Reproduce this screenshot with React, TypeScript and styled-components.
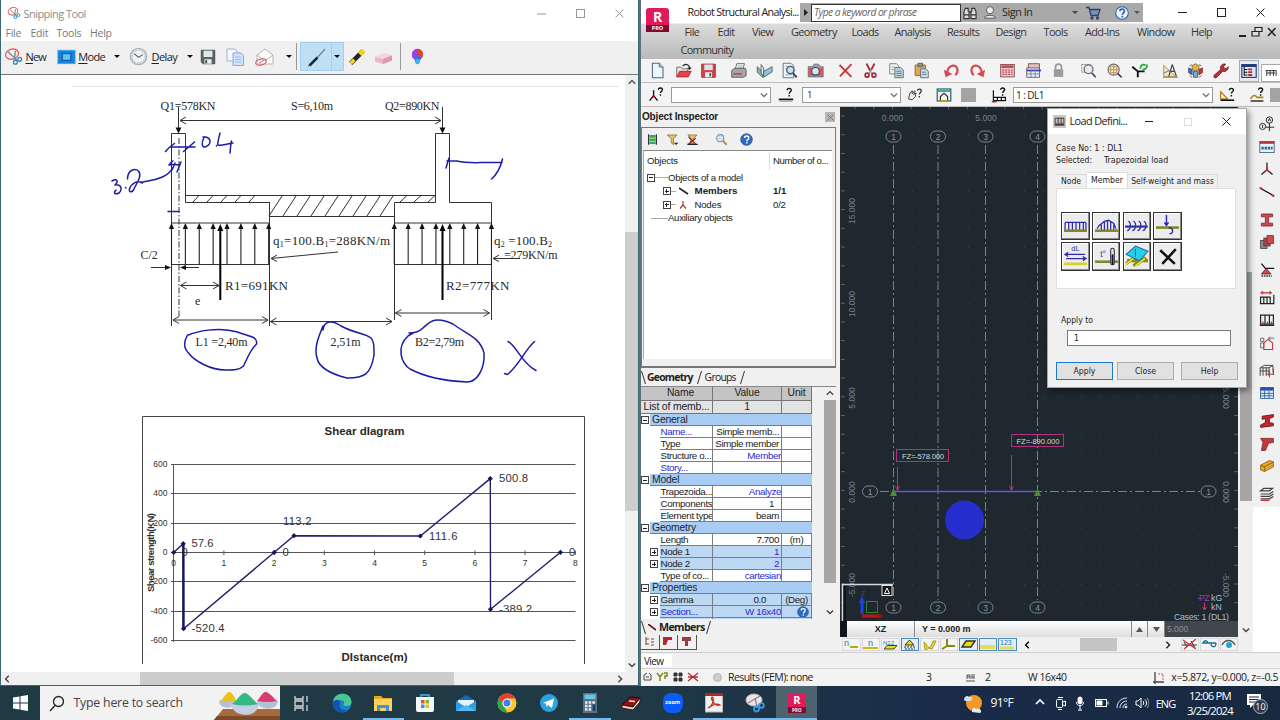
import React from 'react';
import styled, { createGlobalStyle, css } from 'styled-components';

const UI = `'Open Sans', 'Noto Sans', sans-serif`;
const ARIAL = `'Liberation Sans', Arial, sans-serif`;
const TAHOMA = `'DejaVu Sans Condensed', 'Noto Sans', sans-serif`;
const TIMES = `'Liberation Serif', 'Times New Roman', serif`;

const GlobalStyle = createGlobalStyle`
  * { box-sizing: border-box; }
  body { margin: 0; overflow: hidden; background: #1f3a46; }
  svg { display: block; flex: none; }
`;

/* ---------- icons ---------- */

const K = '#222';
const R = '#c8303a';

const icons: Record<string, React.ReactNode> = {
  snip: (
    <g fill="none">
      <ellipse cx="8.5" cy="7.5" rx="7" ry="5.2" stroke="#e0555a" strokeWidth="1.3" transform="rotate(-18 8.5 7.5)" />
      <path d="M4 5l10 9M12 4l-1 10" stroke="#7b8794" strokeWidth="1.4" />
      <circle cx="12" cy="16" r="2" stroke="#2a86c8" strokeWidth="1.4" />
      <circle cx="16.5" cy="13" r="2" stroke="#2a86c8" strokeWidth="1.4" />
    </g>
  ),
  mode: (
    <g>
      <rect x="1" y="3.5" width="18" height="14" fill="#1583dc" />
      <rect x="1" y="3.5" width="18" height="14" fill="none" stroke="#35a6ef" />
      <rect x="5.5" y="7" width="9" height="7" fill="#5ec3f5" stroke="#0b4f96" />
    </g>
  ),
  delay: (
    <g>
      <circle cx="10" cy="10" r="8.6" fill="#dcdfe2" stroke="#aeb2b6" strokeWidth="1.4" />
      <circle cx="10" cy="10" r="6.6" fill="#eff1f2" stroke="#989da1" strokeDasharray="1 2.4" />
      <path d="M5.5 7L10 11l4.5-3" fill="none" stroke="#555" strokeWidth="1.1" />
    </g>
  ),
  floppy: (
    <g>
      <path d="M2.5 2.5h15v15h-13l-2-2z" fill="#5d6266" stroke="#44484b" />
      <rect x="5" y="3" width="10" height="7" fill="#dfe6e8" />
      <rect x="6" y="12.5" width="8" height="5" fill="#eee" />
      <rect x="7" y="13.5" width="2" height="3.5" fill="#444" />
    </g>
  ),
  copyBlue: (
    <g>
      <path d="M2 2h8l2 2v10H2z" fill="#f4f8fc" stroke="#9fb3cc" />
      <path d="M8 6h8l2.500 2.500V18.500H8z" fill="#cfe2fa" stroke="#8ea9d0" />
      <path d="M10 10h6M10 12.500h6M10 15h6" stroke="#9dbbe2" />
    </g>
  ),
  mail: (
    <g fill="#fafafa" stroke="#b5b5b5">
      <path d="M3 8l8-6 8 6v9H3z" />
      <path d="M3 8l8 6 8-6" fill="none" />
      <ellipse cx="7" cy="15" rx="5.500" ry="3" fill="none" stroke="#d66" strokeWidth="1.200" transform="rotate(-15 7 15)" />
      <path d="M5 16l5-3" stroke="#d66" />
    </g>
  ),
  pen: (
    <g>
      <path d="M10 11L18 2" stroke="#7c858c" strokeWidth="1.300" />
      <path d="M2.500 18.500L10.500 10.500" stroke="#1c2b38" strokeWidth="2.500" />
      <path d="M1.200 19.500l2-2" stroke="#1c2b38" />
    </g>
  ),
  highlighter: (
    <g>
      <path d="M3 17L16.500 3.500" stroke="#222" strokeWidth="5" />
      <path d="M13 7L17.500 2.500" stroke="#f2d61d" strokeWidth="5" />
      <path d="M3 17l4-4" stroke="#f2d61d" strokeWidth="4" />
    </g>
  ),
  eraser: (
    <g>
      <path d="M2 10l9-3.500 8 2v5L10 17l-8-2.500z" fill="#eeb4c6" />
      <path d="M2 10l9-3.500 8 2-9 3.500z" fill="#f8d5de" />
      <path d="M10 12v5l9-3.500v-5z" fill="#dc9ab0" />
    </g>
  ),
  paint3d: (
    <g>
      <path d="M10 1a6.500 6.500 0 0 1 6.500 6.500c0 4-4 5.500-4 9a2.500 2.500 0 0 1-5 0c0-3.500-4-5-4-9A6.500 6.500 0 0 1 10 1z" fill="#3f6de8" />
      <path d="M10 1a6.500 6.500 0 0 1 6.500 6.500c0 2-1 3.500-2 4.500L10 8z" fill="#e8422e" />
      <path d="M10 1v7l-5.500 4a7 7 0 0 1-1-4.500A6.500 6.500 0 0 1 10 1z" fill="#a63de0" />
      <path d="M8 13h4l.5 3.500a2.500 2.500 0 0 1-5 0z" fill="#37b6ea" />
    </g>
  ),
  file: (
    <g>
      <path d="M4 1.500h8l4.500 4.500v12.500H4z" fill="#eaf5fc" stroke="#567" strokeWidth="1.200" />
      <path d="M12 1.500V6h4.500" fill="#bcd" stroke="#567" />
    </g>
  ),
  open: (
    <g>
      <path d="M2 17V6h5l2 2h6v9z" fill="#e9e0e0" stroke="#666" />
      <path d="M2 17.500L5.500 11H19l-3.500 6.500z" fill="#e6434b" stroke="#a3232b" />
      <path d="M9 5c2-3 6-3 8 .500v3M15 6.500l2 2 2-2" fill="none" stroke={K} strokeWidth="1.300" />
    </g>
  ),
  saveRed: (
    <g>
      <path d="M2 2.500h16v15.500H2z" fill="#d8434b" stroke="#8f2830" />
      <rect x="5" y="3" width="10" height="6.500" fill="#d6e5ee" />
      <rect x="6" y="12" width="8" height="6" fill="#e8eef2" />
      <rect x="11" y="13" width="2" height="4" fill="#555" />
    </g>
  ),
  print: (
    <g stroke="#555">
      <path d="M6 9l2-7h9l-2 7" fill="#fff" />
      <path d="M2 10l3-2.500h13l1 2.500v6l-3 2H2z" fill="#a7a3a6" />
      <path d="M4 14h10" stroke={R} strokeWidth="1.500" />
      <path d="M9 4.500h6M8.500 6.500h6" stroke="#999" />
    </g>
  ),
  book: (
    <g stroke="#4a5a60" strokeLinejoin="round">
      <path d="M1.500 5.500L8 12v6L1.500 12z" fill="#8fb7a0" />
      <path d="M6 3l3 4v10L6 13z" fill="#e7eef0" />
      <path d="M9 11l10-5.500v6L9 18z" fill="#8fc4dc" />
    </g>
  ),
  preview: (
    <g>
      <path d="M2.500 1.500h9l3.500 3v14h-12.500z" fill="#eef5fa" stroke="#567" />
      <path d="M5 5h4M5 8h3M5 15h8" stroke="#89a" />
      <circle cx="11" cy="9.500" r="4.300" fill="#c4e2ef" stroke="#456" strokeWidth="1.500" />
      <path d="M14 13l4.500 5" stroke="#345" strokeWidth="2.200" />
    </g>
  ),
  camera: (
    <g>
      <path d="M1.500 5.500h5l2-3h5l2 3h3.500v12H1.500z" fill="#9aa3aa" stroke="#667" />
      <rect x="2" y="7" width="16.500" height="9" fill="#d2565b" />
      <circle cx="10" cy="11" r="4.500" fill="#cfe8f5" stroke="#445" strokeWidth="1.300" />
    </g>
  ),
  xred: <path d="M3 3.500l14 14M17 2.500L3.500 17" stroke="#c43c45" strokeWidth="2.300" />,
  cut: (
    <g fill="none" stroke="#a82f38" strokeWidth="2">
      <path d="M5 2l7 12M15 2L8 14" stroke="#aaa" />
      <path d="M5.500 2l4 8M14.500 2L11 9" />
      <circle cx="6" cy="15.500" r="2.300" />
      <circle cx="14" cy="15.500" r="2.300" />
    </g>
  ),
  copy: (
    <g>
      <path d="M2 2h8l2.500 2.500V14H2z" fill="#eef1f3" stroke="#777" />
      <path d="M8 6.500h7l3 3v9H8z" fill="#b9cbd6" stroke="#5e6b74" />
      <path d="M10 11h5M10 13.500h6M10 16h6" stroke="#678" />
      <path d="M4 6h4M4 9h3" stroke="#8a9" />
    </g>
  ),
  paste: (
    <g>
      <path d="M2.500 3.500h12V16h-12z" fill="#dfa457" stroke="#8a5f22" />
      <rect x="6" y="1.500" width="5" height="3.500" fill="#999" stroke="#555" />
      <path d="M9 8h6l3 3v7.500H9z" fill="#c9dcea" stroke="#4f6474" />
      <path d="M11 12h4M11 14.500h5" stroke="#567" />
    </g>
  ),
  undo: (
    <g>
      <path d="M5 12C6 4 15 1 17 8.500c.5 3-1 5.500-2.500 7" fill="none" stroke="#d34a50" strokeWidth="2.600" />
      <path d="M1 9l2 9 8-4z" fill="#d34a50" />
    </g>
  ),
  redo: (
    <g>
      <path d="M15 12C14 4 5 1 3 8.500c-.5 3 1 5.500 2.500 7" fill="none" stroke="#d34a50" strokeWidth="2.600" />
      <path d="M19 9l-2 9-8-4z" fill="#d34a50" />
    </g>
  ),
  calcRed: (
    <g>
      <rect x="2" y="3" width="16" height="14.500" fill="#eec9cb" stroke="#7c4247" />
      <rect x="3" y="4" width="14" height="3" fill="#c2474e" />
      <path d="M4 9.500h12M4 12h12M4 14.500h12" stroke="#b84e55" strokeWidth="1.500" strokeDasharray="2.200 1.200" />
    </g>
  ),
  calcTable: (
    <g>
      <path d="M4 2h13v6H4z" fill="#e3c0c3" stroke="#7c4247" />
      <path d="M2 7h15v11H2z" fill="#eef0f6" stroke="#556" />
      <path d="M2 10h17" stroke="#3a3fb5" strokeWidth="2" />
      <path d="M2 14h15M7 9v9M12 9v9" stroke="#779" />
    </g>
  ),
  lock: (
    <g>
      <path d="M6.500 9V6a3.500 3.500 0 0 1 7 0v3" fill="none" stroke="#999" strokeWidth="2" />
      <rect x="4.500" y="8.500" width="11" height="9" fill="#9a9a9a" />
    </g>
  ),
  zoomWin: (
    <g fill="none">
      <path d="M2 3h10v9H2z" stroke="#777" strokeDasharray="2 1" />
      <circle cx="10" cy="8.500" r="5.200" fill="#e8eff2" stroke="#667" strokeWidth="1.500" />
      <path d="M14 13l4.500 5" stroke="#445" strokeWidth="2" />
    </g>
  ),
  zoomAll: (
    <g fill="none">
      <circle cx="9" cy="9" r="6.500" fill="#f3ead8" stroke="#667" strokeWidth="1.300" />
      <path d="M9 2v14M2 9h14M5.500 5.500h7v7h-7z" stroke="#c08a35" />
      <path d="M13.500 13.500l5 4.500" stroke="#445" strokeWidth="2" />
    </g>
  ),
  rotate: (
    <g fill="none">
      <path d="M1.500 5.500L8 11h8M8 11v7" stroke="#111" strokeWidth="2.200" />
      <path d="M11 8c0-5 4-6 6-4M18.500 3c1 4-2 6-5 5.500" stroke="#28a745" strokeWidth="2" />
    </g>
  ),
  tools: (
    <g>
      <path d="M2 4l14 13H2z" fill="#f0e6c4" stroke="#a98b3d" />
      <path d="M12 3l-4 14M12 3l5 14M9.500 11h6" fill="none" stroke="#444" strokeWidth="1.400" />
      <path d="M2 13l9-4" stroke="#3a6fb5" />
      <path d="M1 18h18" stroke="#b89640" strokeWidth="1.500" />
    </g>
  ),
  cubes: (
    <g>
      <path d="M10 2l4 2.500v4L10 11 6 8.500v-4z" fill="#e0b53a" stroke="#7d6a3a" />
      <path d="M2 7l4 2v6l-4-2.500z" fill="#4d66c8" stroke="#334480" />
      <path d="M18 7l-4 2v6l4-2.500z" fill="#c43a3f" stroke="#7a2228" />
      <path d="M7.500 11h5v7h-5z" fill="#7aa9d0" stroke="#456" />
      <path d="M3 4.500l3-1.500M17 4.500L14 3M3 16l3 2M17 16l-3 2" stroke="#944" />
    </g>
  ),
  wrench: (
    <path d="M2.500 15.500L10 9C9 5 12 1.500 16 2.500l-2.500 3 1 2 2 .5L19 5.500c.5 4-3 6.500-6.500 5.500L5 18.500c-2 1-3.500-1-2.500-3z" fill="#b7323b" stroke="#6e1d23" />
  ),
  inspector: (
    <g>
      <rect x="1" y="2" width="18" height="16" fill="#dfe8f4" stroke="#223a7a" strokeWidth="1.400" />
      <rect x="1" y="2" width="18" height="3" fill="#223a7a" />
      <path d="M4 5v11M4 8h4M4 11.500h4M4 15h4" stroke="#111" strokeWidth="1.300" />
      <path d="M9 8h5M9 11.500h5M9 15h5" stroke="#b02a30" strokeWidth="2.200" />
    </g>
  ),
  beam: <path d="M1 6h18M3 6v9M8.500 6v9M14 6v9M3 10h14M18.500 6v9" fill="none" stroke="#222" strokeWidth="1.500" />,
  nodeQ: (
    <g fill="none" stroke="#111" strokeWidth="1.700">
      <path d="M7 4v7l-5 6M7 11l5 6" />
      <path d="M13 3.500c0-3 5-3 5 0 0 2-2.500 2-2.500 4M15.500 9v2" />
      <path d="M5.500 13L7 11l1.500 2" stroke="#b03" />
    </g>
  ),
  barQ: (
    <g fill="none" stroke="#111">
      <path d="M1 15.500h18" strokeWidth="2.200" />
      <path d="M2 18h16" stroke="#b87" />
      <path d="M11.500 4c0-3 5-3 5 0 0 2-2.500 2-2.500 4.500M14 10v2" strokeWidth="1.800" />
    </g>
  ),
  handQ: (
    <g fill="none" stroke="#333" strokeWidth="1.200">
      <path d="M2 16l2-8 3-3v4l3-4 1 1-2 4 3-2-1 5-4 4z" fill="#eee" />
      <path d="M14 5c0-3 5-3 5 0 0 2.500-2.500 2.500-2.500 5M16.500 12v2" strokeWidth="1.800" />
    </g>
  ),
  house: (
    <g fill="none" stroke="#255">
      <rect x="1.500" y="2.500" width="17" height="15" fill="#e9f6f4" strokeWidth="1.400" />
      <path d="M2 5h16" stroke="#2a8c8c" strokeWidth="2" />
      <path d="M5.500 17v-5l4.500-4 4.500 4v5" stroke="#333" strokeWidth="1.500" />
      <path d="M5 17.500h10" stroke="#c90" strokeWidth="2" />
    </g>
  ),
  loadQ: (
    <g fill="none" stroke="#111" strokeWidth="1.500">
      <path d="M3 4v13h15v-4H3M8 13v4M13 13v4" />
      <path d="M1 18.500h6" stroke="#b03" />
      <path d="M12 3.500c0-3 5-3 5 0 0 2-2.500 2-2.500 4M14.500 9v2" strokeWidth="1.800" />
    </g>
  ),
  ruler: (
    <g fill="none">
      <path d="M2 6l9 9H2z" stroke="#b98219" strokeWidth="1.600" />
      <path d="M2 16.500h17" stroke="#111" strokeWidth="2" />
      <path d="M13 4c0-3 5-3 5 0 0 2-2.500 2-2.500 4M15.500 10v2" stroke="#111" strokeWidth="1.800" />
    </g>
  ),
  truck: (
    <g fill="none">
      <path d="M2 15c3-6 6-5 8-2h8" stroke="#b98219" strokeWidth="2" />
      <path d="M2 17.500h16" stroke="#111" strokeWidth="1.600" />
      <path d="M12 3.500c0-3 5-3 5 0 0 2-2.500 2-2.500 4M14.500 9v2" stroke="#111" strokeWidth="1.800" />
    </g>
  ),
  column: (
    <g>
      <path d="M4 2v16M16 2v16" stroke="#223" strokeWidth="1.600" />
      <path d="M5 3h10v14H5z" fill="#35a66a" />
      <path d="M5 8h10M5 13h10" stroke="#e7d34a" strokeWidth="1.500" />
    </g>
  ),
  filter: (
    <g>
      <path d="M2 3h15l-5.500 6v9L8 15V9z" fill="#e8c15a" stroke="#7a5b18" />
      <path d="M12 15h7l-3.500 3.500z" fill="#222" />
    </g>
  ),
  filterX: (
    <g>
      <path d="M3 3h14l-6 6v8H7V9z" fill="#e8c15a" stroke="#7a5b18" />
      <path d="M4 6l11 11M15 8L4 17" stroke="#8a2228" strokeWidth="1.800" />
      <path d="M2 17.500h16" stroke="#222" strokeWidth="2" />
    </g>
  ),
  magnifier: (
    <g>
      <circle cx="8" cy="8" r="5.500" fill="#cfe3f2" stroke="#7d93a8" strokeWidth="1.600" />
      <path d="M12 12l6 6" stroke="#c08a3c" strokeWidth="3" />
    </g>
  ),
  help: (
    <g>
      <circle cx="10" cy="10" r="9" fill="#2e6cc0" stroke="#1c4a8c" />
      <path d="M7 7.500c0-4 6.500-4 6.500 0 0 2.500-3 2.500-3 5M10.500 14v2.300" fill="none" stroke="#fff" strokeWidth="2.200" />
    </g>
  ),
  // right-hand toolbar
  axes: (
    <g fill="none" stroke="#222" strokeWidth="1.200">
      <circle cx="13" cy="5" r="4" />
      <path d="M11.500 6.500L13 3l1.500 3.500M13 9v10M8 14h11" />
      <circle cx="4.500" cy="13" r="3.800" />
      <path d="M4.500 11v4" />
    </g>
  ),
  stories: (
    <g>
      <rect x="1" y="3" width="18" height="14" fill="#e5f1f3" stroke="#356" />
      <rect x="1" y="3" width="18" height="3" fill="#b9323a" />
      <path d="M3 11.500h14" stroke="#256a94" strokeWidth="3.500" strokeDasharray="3 1" />
    </g>
  ),
  node: (
    <g fill="none" strokeWidth="1.600">
      <path d="M10 2v9M10 11l-7 6M10 11l7 6" stroke="#222" />
      <path d="M10 7v4l-2 2M10 11l2 2" stroke={R} />
    </g>
  ),
  bar: (
    <g>
      <path d="M1 5l18 10" stroke="#111" strokeWidth="1.600" />
      <path d="M1 4.500l3 1.600M16 14l3 1.600" stroke={R} strokeWidth="2.500" />
    </g>
  ),
  section: <path d="M3 2.500h14v3.500h-5v8h5v3.500H3V14h5V6H3z" fill="#cf4a50" stroke="#7a2228" />,
  materials: (
    <g stroke="#444">
      <rect x="2" y="8" width="8" height="10" fill="#888" />
      <rect x="6" y="5" width="8" height="10" fill="#b33f45" />
      <rect x="10" y="2" width="8" height="10" fill="#cf4a50" />
    </g>
  ),
  support: (
    <g>
      <path d="M3 2l5 6h11" stroke="#111" strokeWidth="1.600" fill="none" />
      <path d="M9 8l6 7H3z" fill="#cf4a50" stroke="#5a1b20" />
      <path d="M3 17.500h13" stroke="#333" strokeWidth="1.800" strokeDasharray="2 1" />
    </g>
  ),
  loadCase: (
    <g fill="none" stroke="#222" strokeWidth="1.300">
      <path d="M3 3.500h12" stroke={R} strokeWidth="1.600" />
      <path d="M5 1.500l-2.500 2L5 5.500M13 1.500l2.500 2-2.500 2" stroke={R} />
      <path d="M2 9h12v8H2zM6 9v8M10 9v8M18.500 6v11H1" strokeWidth="1.500" />
    </g>
  ),
  loadDef: (
    <g fill="none" stroke="#222" strokeWidth="1.500">
      <path d="M2 4h16v11H2zM7.500 4v11M13 4v11" />
      <path d="M1 16.500h18" strokeWidth="2" />
      <path d="M5 12v3M10.500 12v3M15.500 12v3" stroke={R} />
    </g>
  ),
  houseLoad: (
    <g fill="none">
      <path d="M2 4h4v4H2zM2 10h4v6H2zM12 4h7M14 2l-2 2 2 2" stroke="#555" />
      <path d="M6 18v-8l5.500-4.500L17 10v8z" stroke={R} strokeWidth="1.300" />
    </g>
  ),
  mesh: (
    <g fill="none" stroke="#444" strokeWidth="1.200">
      <path d="M1.500 6h11v10M1.500 6v10M5 6v10M9 6v10M1.500 10h11M1.500 6l5-3h11l-5 3M17.500 3v9" />
      <path d="M13 9v9M18 7v8M9 14h10" stroke="#a33" />
    </g>
  ),
  tableBlue: (
    <g>
      <rect x="2" y="3" width="16" height="14" fill="#dbe8f6" stroke="#2a5aa0" />
      <rect x="2" y="3" width="16" height="4" fill="#2a4fb0" />
      <path d="M2 10.500h16M2 13.500h16M7 7v10M12.500 7v10" stroke="#2a5aa0" />
    </g>
  ),
  steel: <path d="M4 4l14-2v3l-5 2v5l5 1v3L2 18v-3l6-3V7L4 8z" fill="#c5262d" stroke="#5a1216" />,
  steelCorner: <path d="M2 3h16v5l-6 1-4 9H3l2-10z" fill="#c5373d" stroke="#7a2228" />,
  timber: (
    <g stroke="#8a5a12">
      <path d="M2 9l11-6 5 2v6L7 17l-5-2z" fill="#e3a52c" />
      <path d="M2 9l5 2v6M7 11l11-6" fill="none" />
    </g>
  ),
  layers: (
    <g fill="none" stroke="#444" strokeWidth="1.500">
      <path d="M2 16h11l5-3M2 13h11l5-3M2 10h11l5-3M2 6h11l4-3H6z" />
      <path d="M2 18h11" stroke={R} />
    </g>
  ),
};

type IconProps = { name: string; size?: number };
const Icon = ({ name, size = 16 }: IconProps) => (
  <svg width={size} height={size} viewBox="0 0 20 20">
    {icons[name]}
  </svg>
);

/* ---------- shared parts ---------- */

const Txt = styled.span<{ $size?: number; $ls?: number; $color?: string; $font?: string; $bold?: boolean }>`
  font-family: ${p => p.$font ?? UI};
  font-size: ${p => p.$size ?? 11}px;
  letter-spacing: ${p => p.$ls ?? 0}px;
  color: ${p => p.$color ?? '#222'};
  font-weight: ${p => (p.$bold ? 700 : 400)};
  white-space: pre;
  line-height: 1;
`;

const Desktop = styled.div`
  width: 1280px;
  height: 720px;
  display: flex;
  flex-direction: column;
`;

const Windows = styled.div`
  display: flex;
  height: 686px;
  flex: none;
`;

const Spacer = styled.div<{ $w?: number; $h?: number }>`
  flex: ${p => (p.$w || p.$h ? 'none' : '1')};
  width: ${p => p.$w ?? 0}px;
  height: ${p => p.$h ?? 0}px;
`;

const Caret = styled.i<{ $color?: string }>`
  flex: none;
  border: 3px solid transparent;
  border-top-color: ${p => p.$color ?? '#111'};
  border-bottom: 0;
`;

const Chevron = ({ dir, size = 8, color = '#444' }: { dir: 'up' | 'down' | 'left' | 'right'; size?: number; color?: string }) => {
  const d = { up: 'M1 6l4-4 4 4', down: 'M1 3l4 4 4-4', left: 'M6 1L2 5l4 4', right: 'M3 1l4 4-4 4' }[dir];
  return (
    <svg width={size} height={size} viewBox="0 0 10 10">
      <path d={d} fill="none" stroke={color} strokeWidth="1.7" />
    </svg>
  );
};

/* ---------- Snipping Tool ---------- */

const SnipWindow = styled.section`
  width: 639px;
  flex: none;
  display: flex;
  flex-direction: column;
  background: #fff;
  border: solid #3d6774;
  border-width: 0 1px 1px 1px;
`;

const SnipTitle = styled.header`
  height: 26px;
  flex: none;
  display: flex;
  align-items: center;
  padding: 0 14px 0 6px;
`;

const CaptionButtons = styled.div<{ $gap: number }>`
  display: flex;
  align-items: center;
  gap: ${p => p.$gap}px;
`;

const SnipMenu = styled.nav`
  height: 15px;
  flex: none;
  display: grid;
  align-items: center;
  grid-template-columns: 25px 26px 33.5px 40px;
  padding-left: 4.5px;
`;

const SnipBar = styled.div`
  height: 34px;
  flex: none;
  display: flex;
  align-items: center;
  background: #f0f0f0;
  border-bottom: 1px solid #74787a;
  padding-left: 3px;
  padding-bottom: 2px;
`;

const Rule = styled.i<{ $h: number; $color?: string }>`
  width: 1px;
  height: ${p => p.$h}px;
  background: ${p => p.$color ?? '#9a9a9a'};
  flex: none;
`;

const PenGroup = styled.div`
  display: flex;
  align-items: center;
  width: 44px;
  height: 29px;
  background: #bfdff6;
  border: 1px solid #a2cdee;
  padding-left: 6px;
  margin: 0 4px 0 3px;
`;

const PenDrop = styled.div`
  height: 100%;
  width: 12px;
  display: flex;
  align-items: center;
  justify-content: center;
  border-left: 1px solid #a2cdee;
  margin-left: auto;
`;

const SnipBody = styled.div`
  display: flex;
  height: 597px;
`;

const VScroll = styled.div<{ $w: number }>`
  width: ${p => p.$w}px;
  flex: none;
  display: flex;
  flex-direction: column;
  align-items: center;
  background: #f0f0f0;
`;

const Thumb = styled.i<{ $w: number; $h: number; $color?: string }>`
  flex: none;
  width: ${p => p.$w}px;
  height: ${p => p.$h}px;
  background: ${p => p.$color ?? '#cdcdcd'};
`;

const HScroll = styled.div`
  height: 13px;
  flex: none;
  display: flex;
  align-items: center;
  background: #f0f0f0;
  padding: 0 2px 0 3px;
`;

const U = styled.u`
  text-underline-offset: 2px;
`;

const upArrows = (from: number) =>
  Array.from({ length: 8 }, (_, i) => from + i * 13.88).map(x => (
    <g key={x}>
      <path d={`M${x} 264.500V226`} stroke="#222" strokeWidth="1.100" />
      <path d={`M${x} 223l-2.600 6h5.200z`} fill="#111" />
    </g>
  ));

const dim = (x1: number, x2: number, y: number) => (
  <path key={`${x1}-${y}`} d={`M${x1} ${y}H${x2}M${x1 + 6} ${y - 3.5}L${x1} ${y}l6 3.500M${x2 - 6} ${y - 3.5}L${x2} ${y}l-6 3.500`} />
);

const FootingDrawing = () => (
  <g>
    <path d="M72 86.500H618" stroke="#e2e2e2" />
    <g fill="none" stroke="#333" strokeWidth="1">
      <path d="M171.500 326V133.500H185.500V202.500H269M269.500 202V326M185.500 195.500H435.500M269 216.500H394M171.500 223H269" />
      <path d="M394.500 320V202.500H435.500V133.500H449.500V202.500H491.500V320M394 223H491M171.500 264.500H269M394 264.500H491" />
      <path d="M179 138V318" strokeDasharray="6 2 1.500 2" />
      <path d="M178.500 107V130M442.500 107V130" />
      {dim(180, 441, 120.5)}
      {dim(173, 268, 320)}
      {dim(270.500, 392, 321.500)}
      {dim(395.500, 489.500, 313)}
      {dim(180.500, 219, 285.500)}
      <path d="M151 267.500H168M199 267.500H183" />
      <path d="M338 252L271 258.500M277 255l-6 3.500 6 3M520 258.500H493M499 255l-6 3.500 6 3" />
      {[193, 207, 221, 235, 249].map(x => <path key={x} d={`M${x} 202l6-6.500`} />)}
      {[400, 414, 428].map(x => <path key={x} d={`M${x} 202l7-6.500`} />)}
      {[269, 283, 297, 311, 325, 339, 353, 367, 380].map(x => <path key={x} d={`M${x} 216l13-20`} />)}
    </g>
    <path d="M178.500 133.500l-3-6h6zM442.500 133.500l-3-6h6zM171 267.500l-6-2.500v5zM180 267.500l6-2.500v5z" fill="#111" />
    {upArrows(171.5)}
    {upArrows(394.3)}
    <path d="M220.300 300V228M442.500 300V228" stroke="#000" strokeWidth="2" />
    <path d="M220.300 224l-3 7h6zM442.500 224l-3 7h6z" />
    <g fontFamily={TIMES} fontSize="12" fill="#2a2a2a">
      <text x="160.500" y="109.500" textLength="55">Q1=578KN</text>
      <text x="291" y="109.500" textLength="42">S=6,10m</text>
      <text x="385" y="109.500" textLength="54.500">Q2=890KN</text>
      <text x="140.500" y="259">C/2</text>
      <text x="195" y="304.500">e</text>
      <text x="195.500" y="345.500" textLength="52">L1 =2,40m</text>
      <text x="330.500" y="345.500" textLength="30">2,51m</text>
      <text x="415" y="345.500" textLength="49">B2=2,79m</text>
      <g fontSize="13">
        <text x="225" y="289.500" textLength="63">R1=691KN</text>
        <text x="446" y="289.500" textLength="63.500">R2=777KN</text>
        <text x="273" y="244.500" textLength="117">q<tspan fontSize="8" dy="2">1</tspan><tspan dy="-2">=100.B</tspan><tspan fontSize="8" dy="2">1</tspan><tspan dy="-2">=288KN/m</tspan></text>
        <text x="494" y="244.500" textLength="58">q<tspan fontSize="8" dy="2">2</tspan><tspan dy="-2"> =100.B</tspan><tspan fontSize="8" dy="2">2</tspan></text>
        <text x="504" y="259" fontSize="12" textLength="53.500">=279KN/m</text>
      </g>
    </g>
    <g fill="none" stroke="#1c1ca8" strokeWidth="1.500" strokeLinecap="round" strokeLinejoin="round">
      <path d="M165.500 151.500c3-4 6-6 9-8M170 147H195M183.500 151.500l11-9.500" />
      <path d="M204 137.500c-3 6-2 10 1 9.500 6-2 7-8 1-10h-3M216.500 145.500v.5M220 133c-1 5-3 10-2 12 4 1 8-1 15-2M231.500 141c-1 4-1 8-1.500 12" />
      <path d="M112 181c5-3 7 0 3 4 6-1 8 4 4 8-4 2-6 0-3-3M125.500 187.500l.5.5M127.500 179c0-9 7-11 11-8 4 5-2 12-5 19-2 3-5 2-4-1 2-6 8-9 13-6" />
      <path d="M141 182.500c12-3 27-3 33-17M169 165c2-2 3-4 4-4M169 165c4-1 7 0 11 0M175 163l-3 7M181 162l-4 10M168 211.500H179" />
      <path d="M187.500 335c-4 7-4 13 1 18 6 8 22 17 37 17 8 0 14 0 18-4 4-8 6-15 13-22 2-8-10-8-19-12-20-6-42 0-49 3" />
      <path d="M323 326c-5 12-9 22-6 32 2 10 14 16 30 20 18 0 24-4 27-23 0-9 0-14-3-17-6-5-15-4-30-12-8-6-17-6-18 4" />
      <path d="M413 333l-5 3c-12 11-7 27 2 33 15 8 35 12 57 13 10 0 18-13 17-29-4-16-18-19-31-29-19-9-24-1-30 4-3 3-7 5-14 5" />
      <path d="M508 341.500c9 5 14 22 28 29M534.500 341.500c-10 9-15 23-27 33l-3-1" />
      <path d="M446 168l3-10M447 161h10c12 3 20 1 45 1.500M502.500 159c-2 8-5 15-11 20" />
    </g>
  </g>
);

const tickX = (v: number) => 173.7 + v * 50.2;
const tickY = (v: number) => 553 - v * 0.147;

const shear: [number, number][] = [
  [173.7, 552.4], [183.2, 543.7], [183.6, 628.7], [274.3, 552.3], [294, 535.7],
  [420.3, 536], [490.3, 478.6], [490.5, 609.3], [560.5, 552.3],
];

const ShearChart = () => (
  <g>
    <path d="M142.500 664V416.500H584.500V664" fill="none" stroke="#444" />
    <g stroke="#555">
      {[600, 400, 200, 0, -200, -400, -600].map(v => (
        <path key={v} d={`M171 ${Math.round(tickY(v)) - 0.5}H575.500`} />
      ))}
      <path d="M173.500 464V642" />
      {[1, 2, 3, 4, 5, 6, 7, 8].map(v => <path key={v} d={`M${tickX(v)} 550.500V555`} />)}
    </g>
    <g fontFamily={ARIAL} fontSize="8.500" fill="#333">
      {[600, 400, 200, 0, -200, -400, -600].map(v => (
        <text key={v} x="167.500" y={tickY(v) + 2} textAnchor="end">{v}</text>
      ))}
      {[0, 1, 2, 3, 4, 5, 6, 7, 8].map(v => (
        <text key={v} x={tickX(v)} y="566" textAnchor="middle">{v}</text>
      ))}
    </g>
    <g fontFamily={ARIAL} fontWeight="700" fill="#2b2b2b">
      <text x="324.500" y="435" fontSize="11.500" textLength="80">Shear dIagram</text>
      <text x="341.500" y="660.500" fontSize="11.500" textLength="66">DIstance(m)</text>
      <text transform="rotate(-90 154 592)" x="154" y="592" fontSize="9.500" textLength="79">Shear strength(KN)</text>
    </g>
    <polyline points={shear.map(p => p.join(',')).join(' ')} fill="none" stroke="#20206e" strokeWidth="1.400" />
    <path d="M183.400 544V629" stroke="#15155c" strokeWidth="2.400" />
    {shear.map(([x, y]) => <path key={`${x}${y}`} d={`M${x - 2.6} ${y}l2.600-2.600 2.600 2.600-2.600 2.600z`} fill="#15155c" />)}
    <clipPath id="low"><path d="M490 600h60v11.500h-60z" /></clipPath>
    <g fontFamily={ARIAL} fontSize="11.300" fill="#333">
      <text x="191.500" y="547">57.6</text>
      <text x="181.500" y="555.500">0</text>
      <text x="283" y="525" textLength="28.500">113.2</text>
      <text x="282.500" y="555.500">0</text>
      <text x="429" y="539.500" textLength="28.500">111.6</text>
      <text x="499" y="482" textLength="29">500.8</text>
      <text x="499" y="613" textLength="33" clipPath="url(#low)">-389.2</text>
      <text x="569" y="555.500">0</text>
      <text x="191.500" y="632" textLength="33">-520.4</text>
    </g>
  </g>
);

const SnippingTool = () => (
  <SnipWindow>
    <SnipTitle>
      <Icon name="snip" size={14} />
      <Spacer $w={2.5} />
      <Txt $size={11} $ls={-0.55} $color="#8c8c8c">Snipping Tool</Txt>
      <Spacer />
      <CaptionButtons $gap={30}>
        <svg width="9" height="9"><path d="M0 5h9" stroke="#999" /></svg>
        <svg width="9" height="9"><rect x=".5" y=".5" width="8" height="8" fill="none" stroke="#999" /></svg>
        <svg width="9" height="9"><path d="M.5.500l8 8M8.500.500l-8 8" stroke="#999" /></svg>
      </CaptionButtons>
    </SnipTitle>
    <SnipMenu>
      {['File', 'Edit', 'Tools', 'Help'].map(m => <Txt key={m} $size={10.5} $ls={-0.25} $color="#777">{m}</Txt>)}
    </SnipMenu>
    <SnipBar>
      <Icon name="snip" size={19} />
      <Spacer $w={2.5} />
      <Txt $size={11} $ls={-0.9}><U>N</U>ew</Txt>
      <Spacer $w={11} />
      <Icon name="mode" size={19} />
      <Spacer $w={2.5} />
      <Txt $size={11} $ls={-0.7}><U>M</U>ode</Txt>
      <Spacer $w={9.5} />
      <Caret />
      <Spacer $w={9} />
      <Icon name="delay" size={19} />
      <Spacer $w={3} />
      <Txt $size={11} $ls={-0.55}><U>D</U>elay</Txt>
      <Spacer $w={9.5} />
      <Caret />
      <Spacer $w={6.5} />
      <Icon name="floppy" size={18} />
      <Spacer $w={8} />
      <Icon name="copyBlue" size={20} />
      <Spacer $w={9} />
      <Icon name="mail" size={20} />
      <Spacer $w={11.5} />
      <Caret />
      <Spacer $w={4} />
      <Rule $h={27} />
      <PenGroup>
        <Icon name="pen" size={20} />
        <PenDrop><Caret /></PenDrop>
      </PenGroup>
      <Icon name="highlighter" size={18} />
      <Spacer $w={7} />
      <Icon name="eraser" size={20} />
      <Spacer $w={7} />
      <Rule $h={27} />
      <Spacer $w={8} />
      <Icon name="paint3d" size={17} />
    </SnipBar>
    <SnipBody>
      <svg width="624" height="597" viewBox="1 75 624 597">
        <FootingDrawing />
        <ShearChart />
      </svg>
      <VScroll $w={13}>
        <Spacer $h={4} />
        <Chevron dir="up" />
        <Spacer $h={145} />
        <Thumb $w={13} $h={279} />
        <Spacer />
        <Chevron dir="down" />
        <Spacer $h={3} />
      </VScroll>
    </SnipBody>
    <HScroll>
      <Chevron dir="left" />
      <Spacer $w={128} />
      <Thumb $w={314} $h={13} />
      <Spacer />
      <Chevron dir="right" />
      <Spacer $w={12} />
    </HScroll>
  </SnipWindow>
);

/* ---------- Robot Structural Analysis ---------- */

const RobotWindow = styled.section`
  flex: 1;
  position: relative;
  display: flex;
  flex-direction: column;
  background: #f0f0f0;
  border-left: 2px solid #5d6f78;
  min-width: 0;
`;

const RobotHead = styled.header`
  height: 59px;
  flex: none;
  display: grid;
  grid-template-columns: 32px 1fr;
  background: linear-gradient(#fff 23px, #dcdcdc 24px, #b9b9b9);
`;

const HeadRows = styled.div`
  display: flex;
  flex-direction: column;
  min-width: 0;
`;

const RobotTitle = styled.div`
  height: 23px;
  display: flex;
  align-items: center;
  padding: 2px 15.5px 0 14.5px;
`;

const SearchStrip = styled.div`
  display: flex;
  align-items: center;
  height: 19px;
  width: 342.5px;
  background: #a9a9a9;
`;

const StripArrow = styled.div`
  width: 11px;
  flex: none;
  padding-left: 4px;
`;

const SearchField = styled.div`
  width: 150px;
  height: 18px;
  flex: none;
  display: flex;
  align-items: center;
  background: #fff;
  border: 1px solid #333;
  padding: 0 2px;
  font-style: italic;
`;

const RobotMenu = styled.nav`
  height: 18px;
  display: grid;
  align-items: center;
  grid-template-columns: 33px 34.500px 39px 60.500px 43px 52.500px 48.500px 48px 41.500px 52px 54px 44px auto;
  padding-left: 11.5px;
`;

const SubMenu = styled.nav`
  height: 18px;
  display: flex;
  align-items: center;
  padding-left: 7.5px;
`;

const AppLogo = styled.div`
  width: 23px;
  height: 24px;
  margin: 8px 0 0 5px;
  border-radius: 3px 3px 0 0;
  display: flex;
  flex-direction: column;
  align-items: center;
  justify-content: space-between;
  padding: 2px 0 1px;
  background: linear-gradient(#e01b5c 17px, #7d0b31 17px);
`;

const ToolRow = styled.div<{ $h: number }>`
  height: ${p => p.$h}px;
  flex: none;
  display: flex;
  align-items: center;
  border-bottom: 1px solid #bdbdbd;
  background: #f3f3f3;
`;

const ToolGroup = styled.div`
  display: flex;
  margin-right: 5px;
`;

const Tool = styled.div<{ $w?: number }>`
  width: ${p => p.$w ?? 25.4}px;
  flex: none;
  display: flex;
  justify-content: center;
`;

const ActiveTool = styled.div`
  width: 22px;
  height: 22px;
  display: flex;
  align-items: center;
  justify-content: center;
  background: #e6ebf2;
  border: 1px solid #a3adb7;
  margin-right: 2px;
`;

const EdgeTool = styled.div`
  width: 21px;
  height: 18px;
  background: #fff;
  border: 1px solid #aaa;
  border-right: 0;
  display: flex;
  align-items: center;
  justify-content: center;
  margin-top: 4px;
`;

const Select = styled.div<{ $w: number }>`
  width: ${p => p.$w}px;
  height: 16px;
  flex: none;
  display: flex;
  align-items: center;
  justify-content: space-between;
  background: #fff;
  border: 1px solid #9a9a9a;
  padding: 0 2px 0 2px;
`;

const GreyBlock = styled.i<{ $w: number }>`
  width: ${p => p.$w}px;
  height: 14px;
  background: #a3a3a3;
  flex: none;
`;

const mainTools = [
  ['file', 'open', 'saveRed'],
  ['print', 'book', 'preview', 'camera'],
  ['xred', 'cut', 'copy', 'paste'],
  ['undo', 'redo'],
  ['calcRed', 'calcTable', 'lock'],
  ['zoomWin', 'zoomAll', 'rotate'],
  ['tools', 'cubes', 'wrench'],
];

const menuItems = ['File', 'Edit', 'View', 'Geometry', 'Loads', 'Analysis', 'Results', 'Design', 'Tools', 'Add-Ins', 'Window', 'Help'];

const RobotHeader = () => (
  <RobotHead>
    <AppLogo>
      <Txt $size={14} $bold $color="#fff">R</Txt>
      <Txt $size={5.5} $bold $color="#fff">PRO</Txt>
    </AppLogo>
    <HeadRows>
      <RobotTitle>
        <Txt $size={10.7} $ls={-0.62}>Robot Structural Analysi...</Txt>
        <Spacer />
        <SearchStrip>
          <StripArrow><svg width="5" height="7"><path d="M0 0l4 3.500-4 3.500z" fill="#222" /></svg></StripArrow>
          <SearchField><Txt $size={10.3} $ls={-0.6} $color="#666">Type a keyword or phrase</Txt></SearchField>
          <Spacer $w={2} />
          <svg width="14" height="14" viewBox="0 0 15 14" fill="#ddd" stroke="#333" strokeWidth="1.200">
            <path d="M2.500 2h3v3l1 1v7H1V6zM12.500 2h-3v3l-1 1v7H14V6zM6.500 6h2M1 9h5M9 9h5" />
          </svg>
          <Spacer $w={6} />
          <svg width="14" height="15" viewBox="0 0 15 15" fill="#eee" stroke="#555">
            <circle cx="7.500" cy="5" r="3.800" /><path d="M1.500 13.500c0-4 12-4 12 0z" />
          </svg>
          <Spacer $w={5} />
          <Txt $size={10.8} $ls={-0.45}>Sign In</Txt>
          <Spacer $w={40} />
          <Caret $color="#444" />
          <Spacer $w={8} />
          <svg width="15" height="14" viewBox="0 0 15 14" fill="none" stroke="#2c3f66" strokeWidth="1.300">
            <path d="M0 1.500h3l2 8h7l2-6H4" fill="#7b8fb5" /><circle cx="6" cy="12" r="1" /><circle cx="11.500" cy="12" r="1" />
          </svg>
          <Spacer $w={14} />
          <svg width="14" height="14" viewBox="0 0 20 20">
            <circle cx="10" cy="10" r="9" fill="#eef4fb" stroke="#2d5fa8" strokeWidth="1.500" />
            <path d="M7 7.500c0-4 6.500-4 6.500 0 0 2.500-3 2.500-3 5M10.500 14v2.300" fill="none" stroke="#2d5fa8" strokeWidth="2.400" />
          </svg>
          <Spacer $w={5} />
          <Caret $color="#555" />
        </SearchStrip>
        <Spacer $w={35} />
        <CaptionButtons $gap={30}>
          <svg width="9" height="9"><path d="M0 4.500h9" stroke="#222" /></svg>
          <svg width="9" height="9"><rect x=".5" y=".5" width="8" height="8" fill="none" stroke="#222" /></svg>
          <svg width="9" height="9"><path d="M.5.500l8 8M8.500.500l-8 8" stroke="#222" /></svg>
        </CaptionButtons>
      </RobotTitle>
      <RobotMenu>
        {menuItems.map(m => <Txt key={m} $size={10.9} $ls={-0.6} $color="#333">{m}</Txt>)}
        <svg width="42" height="12" viewBox="0 0 42 12" fill="none" stroke="#222">
          <path d="M4 10h7" strokeWidth="2" />
          <path d="M20 1.500h7v4h-7zM17 5.500h7v4.500h-7z" strokeWidth="1.200" fill="#ddd" />
          <path d="M33 2l7.500 8M40.500 2L33 10" strokeWidth="1.500" />
        </svg>
      </RobotMenu>
      <SubMenu><Txt $size={10.9} $ls={-0.7} $color="#333">Community</Txt></SubMenu>
    </HeadRows>
  </RobotHead>
);

/* object inspector */

const Main = styled.div`
  display: flex;
  height: 545px;
  flex: none;
`;

const Inspector = styled.aside`
  width: 199px;
  flex: none;
  display: flex;
  flex-direction: column;
  background: #f0f0f0;
`;

const PanelTitle = styled.div`
  height: 20px;
  display: flex;
  align-items: center;
  justify-content: space-between;
  padding: 0 5px 0 1px;
`;

const ClosePanel = styled.div`
  width: 10px;
  height: 10px;
  background: #b5b5b5;
  display: flex;
  align-items: center;
  justify-content: center;
`;

const TreeFrame = styled.div`
  width: 195px;
  height: 241px;
  border: 1px solid #777;
  border-bottom-width: 2px;
  padding: 0 3px 7px 1px;
  display: flex;
  flex-direction: column;
`;

const TreeTools = styled.div`
  height: 22px;
  flex: none;
  display: flex;
  align-items: center;
  padding-left: 3px;
`;

const Tree = styled.div`
  flex: 1;
  background: #fff;
  border-top: 1px solid #888;
  border-left: 1px solid #aaa;
  padding-left: 3px;
`;

const TreeHead = styled.div`
  display: grid;
  grid-template-columns: 122px 1fr;
  height: 20px;
  align-items: center;
`;

const TreeCell = styled.div`
  border-left: 1px solid #ddd;
  height: 18px;
  padding-left: 3px;
  display: flex;
  align-items: center;
`;

const TreeRow = styled.div`
  height: 13.5px;
  display: grid;
  grid-template-columns: 126px 1fr;
  align-items: center;
`;

const TreeLabel = styled.div<{ $indent: number }>`
  display: flex;
  align-items: center;
  padding-left: ${p => p.$indent}px;
`;

const ExpandBox = styled.i<{ $open?: boolean; $size?: number }>`
  width: ${p => p.$size ?? 8}px;
  height: ${p => p.$size ?? 8}px;
  flex: none;
  border: 1px solid #444;
  background:
    linear-gradient(#222, #222) center / 4px 1px no-repeat,
    ${p => (p.$open ? 'none' : 'linear-gradient(#222, #222)')} center / 1px 4px no-repeat,
    #fff;
`;

const Dash = styled.i<{ $w: number }>`
  width: ${p => p.$w}px;
  border-top: 1px solid #aaa;
`;

const Tabs = styled.div<{ $h: number }>`
  height: ${p => p.$h}px;
  flex: none;
  display: flex;
  align-items: center;
`;

const TabEdge = ({ flip }: { flip?: boolean }) => (
  <svg width="5" height="13" viewBox="0 0 5 13">
    <path d={flip ? 'M4.500 0L.5 13' : 'M.5 0l4 13'} stroke="#333" fill="none" />
  </svg>
);

const PropArea = styled.div`
  display: flex;
  height: 233px;
  overflow: hidden;
  border-top: 1px solid #888;
  width: 195px;
`;

const PropTable = styled.div`
  width: 171px;
  flex: none;
  background: #fff;
`;

const cellText = css`
  font-family: ${ARIAL};
  font-size: 9.8px;
  letter-spacing: -0.38px;
  line-height: 1;
  white-space: nowrap;
  overflow: hidden;
`;

const HeadRow = styled.div<{ $light?: boolean }>`
  display: grid;
  grid-template-columns: 72px 69px 30px;
  height: ${p => (p.$light ? 13 : 14)}px;
`;

const HeadCell = styled.div<{ $light?: boolean; $pad?: number }>`
  ${cellText}
  font-size: 10.4px;
  letter-spacing: -0.15px;
  display: flex;
  align-items: center;
  justify-content: center;
  padding-left: ${p => p.$pad ?? 0}px;
  background: ${p => (p.$light ? '#e3e3e3' : '#c4c4c4')};
  border: solid #777;
  border-width: 0 1px 1px 0;
  color: #222;
`;

const SectionRow = styled.div`
  height: 12px;
  display: flex;
  align-items: center;
`;

const SectionName = styled.div`
  ${cellText}
  font-size: 10.4px;
  letter-spacing: -0.2px;
  flex: 1;
  height: 12px;
  margin-left: 1px;
  padding: 1px 2px;
  background: #a9cdf2;
  border-bottom: 1px solid #6b7f94;
  color: #1b2433;
`;

const PropRow = styled.div`
  height: 12px;
  display: grid;
  grid-template-columns: 9px 9.500px 53.500px 69px 30px;
  align-items: center;
`;

const Cell = styled.div<{ $align?: string; $link?: boolean; $hl?: boolean; $r?: number }>`
  ${cellText}
  height: 12px;
  padding: 1px ${p => p.$r ?? 1}px 0 1px;
  text-align: ${p => p.$align ?? 'left'};
  color: ${p => (p.$link ? '#2a2ad0' : '#222')};
  background: ${p => (p.$hl ? '#bdd8f3' : '#fff')};
  border: solid #7d7d7d;
  border-width: 0 1px 1px 0;
`;

type Prop = { n: string; v?: string; u?: string; ln?: boolean; lv?: boolean; hl?: boolean; plus?: boolean; r?: number; help?: boolean };
const props: { title: string; rows: Prop[] }[] = [
  {
    title: 'General',
    rows: [
      { n: 'Name...', v: 'Simple memb...', ln: true, r: 2 },
      { n: 'Type', v: 'Simple member', r: 2 },
      { n: 'Structure o...', v: 'Member', lv: true, r: 0 },
      { n: 'Story...', ln: true },
    ],
  },
  {
    title: 'Model',
    rows: [
      { n: 'Trapezoida...', v: 'Analyze', lv: true, r: 0 },
      { n: 'Components', v: '1', r: 7 },
      { n: 'Element type', v: 'beam', r: 2 },
    ],
  },
  {
    title: 'Geometry',
    rows: [
      { n: 'Length', v: '7.700', u: '(m)', r: 2 },
      { n: 'Node 1', v: '1', lv: true, hl: true, plus: true, r: 2 },
      { n: 'Node 2', v: '2', lv: true, hl: true, plus: true, r: 2 },
      { n: 'Type of co...', v: 'cartesian', lv: true, r: 0 },
    ],
  },
  {
    title: 'Properties',
    rows: [
      { n: 'Gamma', v: '0.0', u: '(Deg)', hl: true, plus: true, r: 15 },
      { n: 'Section...', v: 'W 16x40', ln: true, lv: true, hl: true, plus: true, r: 0, help: true },
      { n: '', hl: true },
    ],
  },
];

const CellHelp = styled.div`
  display: flex;
  justify-content: center;
  padding-left: 12px;
  margin-top: -1px;
`;

const SmallTabs = styled.div`
  display: flex;
  height: 15px;
  div {
    width: 18.5px;
    display: flex;
    align-items: center;
    justify-content: center;
    border: solid #555;
    border-width: 0 1px 1px 0;
  }
`;

const ObjectInspector = () => (
  <Inspector>
    <PanelTitle>
      <Txt $font={ARIAL} $size={10} $ls={-0.18} $bold>Object Inspector</Txt>
      <ClosePanel><svg width="7" height="7"><path d="M.5.500l6 6M6.500.500l-6 6" stroke="#777" /></svg></ClosePanel>
    </PanelTitle>
    <TreeFrame>
      <TreeTools>
        <Icon name="column" size={13} />
        <Spacer $w={7} /><Icon name="filter" size={13} />
        <Spacer $w={7} /><Icon name="filterX" size={13} />
        <Spacer $w={16} /><Icon name="magnifier" size={13} />
        <Spacer $w={12} /><Icon name="help" size={13} />
      </TreeTools>
      <Tree>
        <TreeHead>
          <Txt $font={ARIAL} $size={9.6} $ls={-0.25}>Objects</Txt>
          <TreeCell><Txt $font={ARIAL} $size={9.6} $ls={-0.4}>Number of o...</Txt></TreeCell>
        </TreeHead>
        <TreeRow>
          <TreeLabel $indent={0}>
            <ExpandBox $open /><Dash $w={13} /><Txt $font={ARIAL} $size={9.6} $ls={-0.28}>Objects of a model</Txt>
          </TreeLabel>
        </TreeRow>
        <TreeRow>
          <TreeLabel $indent={15.500}>
            <ExpandBox /><Dash $w={5} /><Spacer $w={3} />
            <svg width="10" height="8"><path d="M0 1l9 6" stroke="#222" strokeWidth="1.600" /></svg>
            <Spacer $w={6} /><Txt $font={ARIAL} $size={9.8} $bold>Members</Txt>
          </TreeLabel>
          <Txt $font={ARIAL} $size={9.6} $bold>1/1</Txt>
        </TreeRow>
        <TreeRow>
          <TreeLabel $indent={15.500}>
            <ExpandBox /><Dash $w={5} /><Spacer $w={3} />
            <svg width="8" height="8"><path d="M4 0v4L1 7.500M4 4l3 3.500" stroke="#a33" strokeWidth="1.200" fill="none" /></svg>
            <Spacer $w={8} /><Txt $font={ARIAL} $size={9.6} $ls={-0.2}>Nodes</Txt>
          </TreeLabel>
          <Txt $font={ARIAL} $size={9.600} $ls={-0.2}>0/2</Txt>
        </TreeRow>
        <TreeRow>
          <TreeLabel $indent={4}><Dash $w={17} /><Txt $font={ARIAL} $size={9.600} $ls={-0.28}>Auxiliary objects</Txt></TreeLabel>
        </TreeRow>
      </Tree>
    </TreeFrame>
    <Tabs $h={18}>
      <TabEdge /><Spacer $w={1} />
      <Txt $size={10.4} $ls={-0.75} $bold>Geometry</Txt>
      <Spacer $w={4} /><TabEdge flip />
      <Spacer $w={3} />
      <Txt $size={10.4} $ls={-0.75}>Groups</Txt>
      <Spacer $w={4} /><TabEdge flip />
    </Tabs>
    <PropArea>
      <PropTable>
        <HeadRow>
          <HeadCell $pad={8}>Name</HeadCell><HeadCell>Value</HeadCell><HeadCell>Unit</HeadCell>
        </HeadRow>
        <HeadRow $light>
          <HeadCell $light>List of memb...</HeadCell><HeadCell $light>1</HeadCell><HeadCell $light />
        </HeadRow>
        {props.map(s => (
          <React.Fragment key={s.title}>
            <SectionRow><ExpandBox $open /><SectionName>{s.title}</SectionName></SectionRow>
            {s.rows.map(r => (
              <PropRow key={r.n}>
                <span />
                {r.plus ? <ExpandBox /> : <span />}
                <Cell $link={r.ln} $hl={r.hl}>{r.n}</Cell>
                <Cell $link={r.lv} $hl={r.hl} $align="right" $r={r.r}>{r.v}</Cell>
                <Cell $hl={r.hl} $align="center">
                  {r.help ? <CellHelp><Icon name="help" size={12} /></CellHelp> : r.u}
                </Cell>
              </PropRow>
            ))}
          </React.Fragment>
        ))}
      </PropTable>
      <Spacer $w={11} />
      <VScroll $w={13}>
        <Spacer $h={3} />
        <Chevron dir="up" />
        <Spacer $h={2} />
        <Thumb $w={12} $h={183} $color="#a6a6a6" />
        <Spacer />
        <Chevron dir="down" />
        <Spacer $h={3} />
      </VScroll>
    </PropArea>
    <Tabs $h={16}>
      <TabEdge /><Spacer $w={2} />
      <svg width="8" height="7"><path d="M0 0l8 6" stroke="#611" strokeWidth="1.600" /></svg>
      <Spacer $w={3} />
      <Txt $size={10.7} $ls={-0.65} $bold>Members</Txt>
      <Spacer $w={1} /><TabEdge flip />
    </Tabs>
    <SmallTabs>
      <div><svg width="10" height="10" fill="none" stroke="#744"><path d="M1 0v8M1 2h3M1 7h3M6 2h3M6 5h3M6 8h3" /></svg></div>
      <div><svg width="10" height="10"><path d="M0 0h9v3H5L3 8H0z" fill="#b5282f" /></svg></div>
      <div><svg width="10" height="10"><path d="M0 0h9v4H6v5H3V4H0z" fill="#8f4046" /></svg></div>
    </SmallTabs>
  </Inspector>
);

/* model view */

const ViewPane = styled.div`
  width: 398px;
  flex: none;
  display: flex;
  flex-direction: column;
  background: #1f272f;
`;

const PlaneBar = styled.div`
  height: 16px;
  flex: none;
  display: flex;
  background: #40464c;
`;

const PlaneGap = styled.i`
  width: 7px;
  background: #10151a;
  flex: none;
`;

const PlaneCell = styled.div<{ $w: number; $pad?: number; $bare?: boolean }>`
  width: ${p => p.$w}px;
  display: flex;
  align-items: center;
  padding-left: ${p => p.$pad ?? 0}px;
  justify-content: ${p => (p.$pad ? 'flex-start' : 'center')};
  background: ${p => (p.$bare ? 'none' : 'linear-gradient(#fff, #dedede)')};
  border-right: ${p => (p.$bare ? 0 : 1)}px solid #888;
`;

const ViewTools = styled.div`
  height: 15px;
  flex: none;
  display: flex;
  align-items: center;
  gap: 1px;
  background: #f0f0f0;
`;

const ViewTool = styled.div<{ $on?: boolean }>`
  width: 19px;
  height: 13px;
  display: flex;
  align-items: center;
  justify-content: center;
  background: ${p => (p.$on ? '#e3eef8' : '#f4f4f4')};
  border: 1px solid ${p => (p.$on ? '#4a87bd' : '#d8d8d8')};
`;

const RightTools = styled.div`
  width: 27px;
  display: flex;
  flex-direction: column;
  align-items: center;
  background: linear-gradient(#f0f0f0 400px, #fff 400px);
  padding-top: 5.5px;
`;

const VGroup = styled.div`
  margin-bottom: 5px;
`;

const VTool = styled.div`
  height: 22.7px;
  display: flex;
  align-items: center;
`;

const rightTools = [
  ['axes', 'stories', 'node', 'bar'],
  ['section', 'materials'],
  ['support'],
  ['loadCase', 'loadDef', 'houseLoad'],
  ['mesh', 'tableBlue'],
  ['steel', 'steelCorner', 'timber'],
  ['layers'],
];

const Bubble = ({ x, y, n }: { x: number; y: number; n: number }) => (
  <g>
    <rect x={x - 7.5} y={y - 5.5} width="15" height="11" rx="5.500" fill="none" stroke="#7e868c" />
    <text x={x} y={y + 3} textAnchor="middle" fill="#8d959b">{n}</text>
  </g>
);

const axisX = [893.5, 938, 985.500, 1037.500];
const vLabels: [string, number][] = [['15.000', 211], ['10.000', 304], ['5.000', 398], ['0.000', 492], ['-5.000', 585]];

const ModelCanvas = () => (
  <svg width="398" height="514" viewBox="840 107 398 514" fontFamily={ARIAL} fontSize="8.500">
    <defs>
      <pattern id="dots" x="837" y="116" width="18.720" height="18.720" patternUnits="userSpaceOnUse">
        <rect x="0" y="0" width="1" height="1" fill="#3b454e" />
      </pattern>
    </defs>
    <rect x="840" y="107" width="398" height="514" fill="#1f272f" />
    <rect x="860" y="107" width="360" height="514" fill="url(#dots)" />
    {Array.from({ length: 27 }, (_, i) => 116 + i * 18.72).map(y => (
      <path key={y} d={`M841 ${y}h4M1234 ${y}h4`} stroke="#59636b" />
    ))}
    {Array.from({ length: 20 }, (_, i) => 855 + i * 18.72).map(x => <path key={x} d={`M${x} 107v2.500`} stroke="#59636b" />)}
    <g stroke="#79828a" strokeDasharray="9 3 2 3" fill="none">
      {axisX.map(x => <path key={x} d={`M${x} 145V600`} />)}
      <path d="M880 491.500H1201" />
    </g>
    {axisX.map((x, i) => <Bubble key={x} x={x} y={136.500} n={i + 1} />)}
    {axisX.map((x, i) => <Bubble key={x} x={x} y={607.500} n={i + 1} />)}
    <Bubble x={870} y={491.500} n={1} />
    <Bubble x={1208.500} y={491.500} n={1} />
    <g fill="#77808a">
      <text x="892.500" y="121" textAnchor="middle">0.000</text>
      <text x="986" y="121" textAnchor="middle">5.000</text>
      {vLabels.map(([t, y]) => (
        <g key={t}>
          <text transform={`rotate(-90 855 ${y})`} x="855" y={y} textAnchor="middle">{t}</text>
          <text transform={`rotate(90 1223 ${y})`} x="1223" y={y} textAnchor="middle">{t}</text>
        </g>
      ))}
    </g>
    <path d="M893 491.500H1038" stroke="#6a57c8" strokeWidth="1.600" />
    <path d="M893.500 488l-3.500 8h7zM1037.500 488l-3.500 8h7z" fill="#4f8a35" />
    <g fill="none" stroke="#b5317f">
      <rect x="896.500" y="449.500" width="52" height="12" />
      <rect x="1011.500" y="434.500" width="52" height="12" />
      <path d="M897.500 467V490M1011.500 455V490M895.500 486l2 4.500 2-4.500M1009.500 486l2 4.500 2-4.500" />
    </g>
    <g fill="#d5d9dc" fontSize="7.600">
      <text x="902" y="458.500" textLength="42">FZ=-578.000</text>
      <text x="1016.500" y="443.500" textLength="43">FZ=-890.000</text>
    </g>
    <circle cx="964.500" cy="520" r="19.500" fill="#262fce" />
    <path d="M842.500 621V584.500H893" fill="none" stroke="#d5d9dc" strokeWidth="1.600" />
    <rect x="843.500" y="586" width="2.500" height="35" fill="#10151a" />
    <rect x="882" y="585.500" width="10" height="10" fill="#10151a" stroke="#e4e4e4" />
    <path d="M887 588l-2.500 5.500h5z" fill="none" stroke="#fff" />
    <path d="M862 614V602" stroke="#2240e0" strokeWidth="3" />
    <path d="M862 596l-3 7h6z" fill="#2240e0" />
    <path d="M862 616H879" stroke="#c01818" strokeWidth="3" />
    <path d="M884 616l-6-3v6z" fill="#8f1414" />
    <rect x="866.500" y="601.500" width="11" height="11" fill="none" stroke="#1e8a2e" />
    <text x="861" y="596" fill="#2c47c4" fontSize="7">Z</text>
    <g fontSize="8.800" fill="#a9bfd2">
      <text x="1197" y="600.500" fill="#8c3fd0" textLength="12.500">-PZ</text>
      <text x="1211" y="600.500">kG</text>
      <path d="M1204.500 603v6M1202.500 607l2 3 2-3" stroke="#e0316f" fill="none" />
      <text x="1211" y="610">kN</text>
      <text x="1174" y="619.500" textLength="55">Cases: 1 (DL1)</text>
    </g>
  </svg>
);

const viewIcons: { on?: boolean; art: React.ReactNode }[] = [
  { art: <g><text x="0" y="7" fontSize="9" fill="#0b7fb8" fontFamily={ARIAL}>n</text><path d="M6 8h8" stroke="#ba0" strokeWidth="2" /></g> },
  { art: <g><text x="5" y="7" fontSize="9" fill="#0b7fb8" fontFamily={ARIAL}>n</text><path d="M0 9h15" stroke="#cb0" strokeWidth="2" /></g> },
  { art: <g><text x="0" y="5.500" fontSize="6" fill="#0b7fb8" fontFamily={ARIAL}>N12</text><path d="M1 10l3-3.500h10l-3 3.500z" fill="#e6dd20" stroke="#443" /></g> },
  { on: true, art: <g><path d="M3 6l4.500-5L12 6z" fill="#e6dd20" stroke="#332" /><path d="M2 8h11M3 10h10" stroke="#332" strokeDasharray="2 1" /></g> },
  { art: <path d="M2 3l3 3v5H3zM6 9l3-2 2-5h3l-4 8z" fill="#e6dd20" stroke="#aa9c20" /> },
  { art: <path d="M6 0v7h8M6 7l-5 3" stroke="#8a8a10" strokeWidth="2" fill="none" /> },
  { on: true, art: <path d="M1 8l4-6h9l-4 6z" fill="#e6dd20" stroke="#332" strokeWidth="1.400" /> },
  { on: true, art: <path d="M0 8h15" stroke="#e0dc60" strokeWidth="4" /> },
  { on: true, art: <g><text x="0" y="6" fontSize="7" fill="#0b7fb8" fontFamily={ARIAL}>123</text><path d="M0 9h14" stroke="#e0dc60" strokeWidth="3" /></g> },
];

const viewIconsRight: React.ReactNode[] = [
  <g key="a"><path d="M0 6h15M2 3l3 5M9 2l4 7" stroke="#333" fill="none" /><path d="M1 1l13 9M14 0L2 10" stroke="#c33" strokeWidth="1.300" fill="none" /></g>,
  <path key="b" d="M0 4h14M9 4c0 5 5 5 5 0M1 4c1-3 4-3 5 0" stroke="#1b6f9a" strokeWidth="1.300" fill="none" />,
  <g key="c"><path d="M1 6c3-6 10-6 13 0" fill="none" stroke="#555" strokeWidth="1.500" /><circle cx="8" cy="6" r="3" fill="#2aa7c8" /></g>,
];

const ModelView = () => (
  <ViewPane>
    <ModelCanvas />
    <PlaneBar>
      <PlaneGap />
      <PlaneCell $w={68}><Txt $font={ARIAL} $size={9} $bold>XZ</Txt></PlaneCell>
      <PlaneCell $w={217} $pad={7}><Txt $font={ARIAL} $size={9} $ls={-0.05} $bold>Y = 0.000 m</Txt></PlaneCell>
      <PlaneCell $w={16}><svg width="7" height="5"><path d="M0 5h7L3.500 0z" fill="#555" /></svg></PlaneCell>
      <PlaneCell $w={17}><svg width="7" height="5"><path d="M0 0h7L3.500 5z" fill="#555" /></svg></PlaneCell>
      <PlaneCell $w={40} $pad={2} $bare><Txt $font={ARIAL} $size={8.5} $color="#8b9196">5.000</Txt></PlaneCell>
    </PlaneBar>
    <ViewTools>
      <Spacer $w={1} />
      {viewIcons.map((v, i) => (
        <ViewTool key={i} $on={v.on}><svg width="15" height="11">{v.art}</svg></ViewTool>
      ))}
      <Spacer $w={5} />
      <Chevron dir="left" color="#000" />
      <Spacer $w={46} />
      <Thumb $w={37} $h={13} $color="#c4c4c4" />
      <Spacer $w={45} />
      <Chevron dir="right" color="#222" />
      <Spacer $w={7} />
      {viewIconsRight.map((v, i) => <ViewTool key={i}><svg width="15" height="11">{v}</svg></ViewTool>)}
    </ViewTools>
  </ViewPane>
);

/* load definition dialog */

const Dialog = styled.div`
  position: absolute;
  left: 406px;
  top: 108px;
  width: 200px;
  height: 280px;
  background: #f0f0f0;
  border: 1px solid #9fa6ab;
  box-shadow: 2px 3px 6px rgba(0, 0, 0, 0.45);
  display: flex;
  flex-direction: column;
`;

const DialogTitle = styled.div`
  height: 25px;
  flex: none;
  background: #fff;
  display: flex;
  align-items: center;
  padding: 0 15px 0 5px;
`;

const TitleIcon = styled.div`
  width: 13px;
  height: 13px;
  background: #c9c9c9;
  display: flex;
  align-items: center;
  justify-content: center;
`;

const DialogBody = styled.div`
  padding: 8px 7px 0 8px;
`;

const InfoLine = styled.div`
  height: 12px;
  display: grid;
  grid-template-columns: 48px 1fr;
  align-items: center;
`;

const DialogTabs = styled.div`
  display: flex;
  align-items: flex-end;
  height: 22px;
  padding-top: 5px;
`;

const DialogTab = styled.div<{ $w: number; $on?: boolean }>`
  width: ${p => p.$w}px;
  height: ${p => (p.$on ? 16 : 14)}px;
  display: flex;
  align-items: center;
  justify-content: center;
  background: ${p => (p.$on ? '#fff' : 'transparent')};
  border: solid #dcdcdc;
  border-width: 1px 1px 0 0;
`;

const LoadPanel = styled.div`
  width: 180px;
  height: 101px;
  background: #fff;
  border: 1px solid #e0e0e0;
  padding: 22.5px 0 0 4px;
  display: grid;
  grid-template-columns: repeat(4, 28.500px);
  grid-auto-rows: 28.500px;
  gap: 2.3px;
`;

const LoadButton = styled.div`
  background: #ececec;
  border: 1px solid #333;
  box-shadow: inset -1px -1px 0 #888, inset 1px 1px 0 #fff;
  display: flex;
  align-items: center;
  justify-content: center;
`;

const ApplyLabel = styled.div`
  height: 10px;
  display: flex;
  align-items: center;
  padding-left: 5px;
  margin-top: 26px;
`;

const Field = styled.div`
  width: 164px;
  height: 16px;
  margin: 5px 0 0 11px;
  background: #fff;
  border: 1px solid #7a7a7a;
  padding: 0 6px;
  display: flex;
  align-items: center;
`;

const DialogButtons = styled.div`
  display: grid;
  grid-template-columns: 57px 57px 57px;
  column-gap: 4px;
  height: 18px;
  margin-top: 16px;
  div:last-child { margin-left: 3px; margin-right: -3px; }
`;

const PushButton = styled.div<{ $primary?: boolean }>`
  background: #e1e1e1;
  border: ${p => (p.$primary ? '1.5px solid #1c78d0' : '1px solid #adadad')};
  display: flex;
  align-items: center;
  justify-content: center;
`;

const beamLine = <path d="M1 17h22" stroke="#85852a" strokeWidth="2.500" />;
const loadArt: React.ReactNode[] = [
  <g key="u">{beamLine}<path d="M2 9h20M2 9v7M5.500 9v7M9 9v7M12.500 9v7M16 9v7M19.500 9v7M22 9v7" stroke="#2b2bb0" strokeWidth="1.200" /></g>,
  <g key="t">{beamLine}<path d="M3 15l2-3 5-4 4-1 5 3 2 5M7 11v5M10 8v8M13 7v9M16 8v8M19 11v5" stroke="#2b2bb0" strokeWidth="1.200" fill="none" /></g>,
  <g key="m"><path d="M1 13h22" stroke="#85852a" strokeWidth="2.500" /><path d="M4 8c3 0 3 8-1 9M9 8c3 0 3 8-1 9M14 8c3 0 3 8-1 9M19 8c3 0 3 8-1 9M1 13h21" stroke="#2b2bb0" fill="none" strokeWidth="1.200" /></g>,
  <g key="f"><path d="M1 14h22" stroke="#85852a" strokeWidth="2.500" /><path d="M11 2v10M9 9l2 3 2-3M13 14c5 0 5 6 1 6" stroke="#2b2bb0" fill="none" strokeWidth="1.400" /></g>,
  <g key="d"><text x="8" y="7" fontSize="7" fill="#2b2bb0" fontFamily={ARIAL}>dL</text><path d="M3 10h18M3 14h18M5 8l-3 2 3 2M19 12l3 2-3 2" stroke="#2b2bb0" fill="none" strokeWidth="1.300" /><path d="M1 19h22" stroke="#d6cf2a" strokeWidth="2.500" /></g>,
  <g key="h"><path d="M1 17h22" stroke="#85852a" strokeWidth="2.500" /><text x="6" y="12" fontSize="8" fill="#2b2bb0" fontFamily={ARIAL}>t°</text><rect x="16" y="4" width="3.500" height="16" rx="1.700" fill="#dde" stroke="#334" /><path d="M17.800 10v10" stroke="#113" strokeWidth="1.800" /></g>,
  <g key="p"><path d="M2 19l8-6M12 20l9-7M3 16h20M9 21l6-5" stroke="#8a8a10" strokeWidth="3" /><path d="M1 20l8-6M11 21l9-7" stroke="#f0e830" strokeWidth="1.500" /><path d="M2 10l9-8 12 5-8 9z" fill="#25d0ee" stroke="#1c6d9c" /><path d="M11 5v7" stroke="#2b2bb0" strokeDasharray="2 1" /></g>,
  <path key="x" d="M5 6l14 13M20 5L7 19" stroke="#111" strokeWidth="2.400" />,
];

const LoadDialog = () => (
  <Dialog>
    <DialogTitle>
      <TitleIcon><Icon name="loadDef" size={11} /></TitleIcon>
      <Spacer $w={3.5} />
      <Txt $size={10.9} $ls={-0.62}>Load Defini...</Txt>
      <Spacer />
      <CaptionButtons $gap={30.5}>
        <svg width="8" height="9"><path d="M0 4.500h8" stroke="#222" /></svg>
        <svg width="8" height="8"><rect x=".5" y=".5" width="7" height="7" fill="none" stroke="#ddd" /></svg>
        <svg width="9" height="9"><path d="M.5.500l8 8M8.500.500l-8 8" stroke="#222" /></svg>
      </CaptionButtons>
    </DialogTitle>
    <DialogBody>
      <InfoLine><Txt $font={TAHOMA} $size={8.8} $ls={0.05}>Case No: 1 : DL1</Txt></InfoLine>
      <InfoLine>
        <Txt $font={TAHOMA} $size={8.600}>Selected:</Txt>
        <Txt $font={TAHOMA} $size={8.800}>Trapezoidal load</Txt>
      </InfoLine>
      <DialogTabs>
        <DialogTab $w={31}><Txt $font={TAHOMA} $size={8.600}>Node</Txt></DialogTab>
        <DialogTab $w={41} $on><Txt $font={TAHOMA} $size={8.600}>Member</Txt></DialogTab>
        <DialogTab $w={90}><Txt $font={TAHOMA} $size={8.600}>Self-weight and mass</Txt></DialogTab>
      </DialogTabs>
      <LoadPanel>
        {loadArt.map((a, i) => (
          <LoadButton key={i}><svg width="25" height="25" viewBox="0 0 24 24">{a}</svg></LoadButton>
        ))}
      </LoadPanel>
      <ApplyLabel><Txt $font={TAHOMA} $size={8.600}>Apply to</Txt></ApplyLabel>
      <Field><Txt $font={TAHOMA} $size={8.600}>1</Txt></Field>
      <DialogButtons>
        <PushButton $primary><Txt $font={TAHOMA} $size={8.600}>Apply</Txt></PushButton>
        <PushButton><Txt $font={TAHOMA} $size={8.600}>Close</Txt></PushButton>
        <PushButton><Txt $font={TAHOMA} $size={8.600}>Help</Txt></PushButton>
      </DialogButtons>
    </DialogBody>
  </Dialog>
);

const ViewStrip = styled.div`
  height: 16px;
  flex: none;
  display: flex;
  align-items: center;
  border-top: 1px solid #d0d0d0;
`;

const ViewName = styled.div`
  width: 31px;
  height: 13px;
  background: #fff;
  padding-left: 3px;
  display: flex;
  align-items: center;
`;

const StatusBar = styled.footer`
  flex: 1;
  display: flex;
  align-items: center;
  background: #f3f3f3;
  border-top: 1px solid #d5d5d5;
`;

const RobotApp = () => (
  <RobotWindow>
    <RobotHeader />
    <ToolRow $h={24}>
      <Spacer $w={4} />
      {mainTools.map((g, i) => (
        <ToolGroup key={i}>{g.map(n => <Tool key={n}><Icon name={n} size={17} /></Tool>)}</ToolGroup>
      ))}
      <ActiveTool><Icon name="inspector" size={16} /></ActiveTool>
      <EdgeTool><Icon name="beam" size={12} /></EdgeTool>
    </ToolRow>
    <ToolRow $h={24}>
      <Tool $w={29.5}><Icon name="nodeQ" size={16} /></Tool>
      <Select $w={100}><span /><Chevron dir="down" color="#777" /></Select>
      <Tool $w={31}><Icon name="barQ" size={16} /></Tool>
      <Select $w={99}><Txt $size={9.500}> 1</Txt><Chevron dir="down" color="#777" /></Select>
      <Tool $w={27}><Icon name="handQ" size={15} /></Tool>
      <Spacer $w={4} />
      <Tool $w={25}><Icon name="house" size={16} /></Tool>
      <Spacer $w={4.5} />
      <GreyBlock $w={15} />
      <Spacer $w={9} />
      <Tool $w={28}><Icon name="loadQ" size={16} /></Tool>
      <Select $w={200}><Txt $size={10} $ls={-0.55}>1 : DL1</Txt><Chevron dir="down" color="#777" /></Select>
      <Tool $w={27}><Icon name="ruler" size={16} /></Tool>
      <Spacer $w={3} />
      <Tool $w={27}><Icon name="truck" size={16} /></Tool>
      <GreyBlock $w={12} />
    </ToolRow>
    <Main>
      <ObjectInspector />
      <ModelView />
      <VScroll $w={15}>
        <Spacer $h={165} />
        <Thumb $w={12} $h={229} $color="#a6a6a6" />
        <Spacer />
        <Chevron dir="down" />
        <Spacer $h={18} />
      </VScroll>
      <RightTools>
        {rightTools.map((g, i) => (
          <VGroup key={i}>{g.map(n => <VTool key={n}><Icon name={n} size={16} /></VTool>)}</VGroup>
        ))}
      </RightTools>
    </Main>
    <ViewStrip><ViewName><Txt $size={10} $ls={-0.6}>View</Txt></ViewName></ViewStrip>
    <StatusBar>
      <Spacer $w={2} />
      <svg width="56" height="11" viewBox="0 0 56 11" fill="none">
        <path d="M1 8V3l3-2M1 8h7V3M6 1l2 2M3 5h3" stroke="#444" />
        <path d="M14 1l3 4 3-4M17 5v4M21 1h3v3h-2v3" stroke="#7c8a1c" strokeWidth="1.500" />
        <path d="M31 1h3v3h-3zM36 1h3v3h-3zM31 6h3v3h-3zM36 6h3v3h-3z" fill="#333" stroke="#333" />
        <path d="M45 1l10 8M55 1L45 9M45 5h10" stroke="#a33" strokeWidth="1.300" />
      </svg>
      <Spacer $w={14} />
      <svg width="9" height="9"><circle cx="4.500" cy="4.500" r="4" fill="#cfcfcf" stroke="#b5b5b5" /></svg>
      <Spacer $w={6} />
      <Txt $size={10.500} $ls={-0.55}>Results (FEM): none</Txt>
      <Spacer $w={113} />
      <Txt $size={10.500}>3</Txt>
      <Spacer $w={34} />
      <svg width="9" height="9" fill="none" stroke="#555"><path d="M1 6V2h3v4M1 4h3M6 1v5M8 1v5M6 4h2M0 8h9" /></svg>
      <Spacer $w={10} />
      <Txt $size={10.500}>2</Txt>
      <Spacer $w={37} />
      <Txt $size={10.500} $ls={-0.5}>W 16x40</Txt>
      <Spacer />
      <svg width="12" height="12" fill="none" stroke="#444"><path d="M2 0v12M0 10h11" strokeWidth="1.300" /><path d="M5 2h5v6" stroke="#c55" strokeDasharray="2 1" /></svg>
      <Spacer $w={6} />
      <Txt $size={10.500} $ls={-0.400}>x=5.872, y=0.000, z=-0.5</Txt>
      <Spacer $w={2} />
    </StatusBar>
    <LoadDialog />
  </RobotWindow>
);

/* ---------- taskbar ---------- */

const Taskbar = styled.footer`
  flex: 1;
  display: flex;
  align-items: stretch;
  background: linear-gradient(90deg, #1f3a43, #1f3a46 50%, #1a2b49 75%, #182a40);
`;

const StartButton = styled.div`
  width: 40px;
  display: flex;
  align-items: center;
  justify-content: center;
`;

const SearchBox = styled.div`
  width: 240px;
  display: flex;
  align-items: center;
  background: #f2f2f2;
  padding-left: 9px;
`;

const TaskSlot = styled.div<{ $active?: boolean; $running?: boolean }>`
  width: 41.35px;
  flex: none;
  display: flex;
  align-items: center;
  justify-content: center;
  background: ${p => (p.$active ? '#4d646e' : 'transparent')};
  box-shadow: ${p => (p.$running ? 'inset 0 -2px 0 #76b9ed' : 'none')};
`;

const Tray = styled.div`
  flex: 1;
  display: flex;
  align-items: center;
  color: #fff;
`;

const Clock = styled.div`
  width: 50px;
  display: flex;
  flex-direction: column;
  align-items: center;
  gap: 4px;
`;

const ZoomLogo = styled.div`
  width: 20px;
  height: 20px;
  border-radius: 8px;
  background: #0b5cff;
  display: flex;
  align-items: center;
  justify-content: center;
`;

const taskIcons: { id: string; running?: boolean; active?: boolean; art: React.ReactNode }[] = [
  { id: 'view', art: <g fill="none" stroke="#d5dadd" strokeWidth="1.300"><path d="M4 3v3h8V3M4 18v-3h8v3M4 8h8v5H4zM16 3v6M16 12v6" /></g> },
  { id: 'edge', art: <g><circle cx="10" cy="10" r="9.500" fill="#1d7fd0" /><path d="M1 9C3-2 19-2 19.500 9c0 4-6 5-8 3 2-3 0-5-3-5C5 7 2 8 1 9z" fill="#4cc88a" /><path d="M1 9c3-4 8-2 7 1-2 4 2 8 7 7-6 5-15 1-14-8z" fill="#1255a8" /></g> },
  { id: 'explorer', running: true, art: <g><path d="M1 3h7l2 2h9v4H1z" fill="#e8a820" /><path d="M1 6h18v12H1z" fill="#fbd25c" /><path d="M4 12h12v6h-3v-3H7v3H4z" fill="#3f93d6" /></g> },
  { id: 'store', art: <g><path d="M6 4V2h8v2" fill="none" stroke="#4fb1e8" strokeWidth="1.500" /><path d="M1 4h18v13q0 2-2 2H3q-2 0-2-2z" fill="#f6f8f9" /><path d="M6 7h3.500v3.500H6z" fill="#e8502a" /><path d="M10.500 7H14v3.500h-3.500z" fill="#7dba2a" /><path d="M6 11.500h3.500V15H6z" fill="#2a9ae0" /><path d="M10.500 11.500H14V15h-3.500z" fill="#f6b91a" /></g> },
  { id: 'mail', art: <g><path d="M0 8l10-6 10 6v10H0z" fill="#1567b8" /><path d="M2 7h16v6H2z" fill="#e8f3fa" /><path d="M0 8l10 6 10-6v10H0z" fill="#2f9de6" /><path d="M0 18l10-6 10 6z" fill="#53baf2" /></g> },
  { id: 'chrome', art: <g><circle cx="10" cy="10" r="9.500" fill="#fbc52b" /><path d="M10 .5A9.500 9.500 0 0 1 18.500 5.500H10L6 12 1.800 5.300A9.500 9.500 0 0 1 10 .5z" fill="#df4131" /><path d="M1.800 5.300L6.500 13l4 6.400A9.500 9.500 0 0 1 1.800 5.300z" fill="#2ba24c" /><circle cx="10" cy="10" r="4.600" fill="#fff" /><circle cx="10" cy="10" r="3.500" fill="#3d7ff0" /></g> },
  { id: 'telegram', art: <g><circle cx="10" cy="10" r="9" fill="#2da3dc" /><path d="M4 10l11-4.500L13 15l-4-3-1.500 2-.5-3.500z" fill="#fff" /></g> },
  { id: 'calc', running: true, art: <g><rect x="3" y="0" width="14" height="20" fill="#5c7282" /><rect x="4.500" y="1.500" width="11" height="4.500" fill="#67c6e8" /><path d="M5 9.500h10M5 13h7M5 16.500h7" stroke="#e4edf2" strokeWidth="2.400" strokeDasharray="2.500 1.200" /><rect x="12.700" y="11.500" width="2.600" height="6.500" fill="#1d3c73" /></g> },
  { id: 'book', art: <g><path d="M1 12l8-8 10 1-7 9z" fill="#8c1418" stroke="#1c0808" /><path d="M1 12l11 2 7-9v4l-7 8-11-2z" fill="#e8d8c8" stroke="#4a1012" /><path d="M8 8l6 .5" stroke="#f4e6d6" strokeWidth="1.300" /></g> },
];

const taskIconsRight: typeof taskIcons = [
  { id: 'acrobat', running: true, art: <g><rect x="1.500" y="0" width="17" height="19" fill="#f1f1f1" stroke="#b7b7b7" /><rect x="1" y="0" width="18" height="3" fill="#b3261e" /><path d="M4 15c5-2 6-8 5-10s-2 0-1 2c2 4 5 6 8 5-3-2-8 0-12 3z" fill="none" stroke="#c8281f" strokeWidth="1.300" /></g> },
  { id: 'snip', running: true, art: <g><ellipse cx="9" cy="7" rx="8" ry="6" fill="#eee4e4" stroke="#c9b4b4" /><path d="M3 10L15 3M10 5l2 9" stroke="#888" strokeWidth="1.300" /><circle cx="11.500" cy="16" r="2.500" fill="none" stroke="#3a9be0" strokeWidth="1.800" /><circle cx="16.500" cy="12.500" r="2.300" fill="none" stroke="#3a9be0" strokeWidth="1.800" /></g> },
];

const TaskLogo = styled.div`
  width: 18px;
  height: 20px;
  border-radius: 2px 2px 0 0;
  background: linear-gradient(#e01b5c 14px, #7d0b31 14px);
  display: flex;
  flex-direction: column;
  align-items: center;
  justify-content: space-between;
  padding: 1px 0;
`;

const renderTask = (t: (typeof taskIcons)[number]) => (
  <TaskSlot key={t.id} $running={t.running}>
    <svg width="20" height="20" viewBox="0 0 20 20">{t.art}</svg>
  </TaskSlot>
);

const Bowls = () => (
  <svg width="67" height="34" viewBox="0 0 67 34">
    <path d="M10 23H67V34H1z" fill="#a8693c" />
    <path d="M1 34l3-4h63v4z" fill="#7d4a28" />
    <path d="M6 14.500h18c0 9-18 10-18 0z" fill="#b6bfd8" />
    <path d="M7 15c3-2 6-8 9-9s5 5 8 9q-8 2-17 0z" fill="#e9c21f" />
    <path d="M44 14.500h21c0 11-20 11-21 0z" fill="#b6bfd8" />
    <path d="M44 15c3-3 5-8 8-9s8 5 12 9q-10 2-20 0z" fill="#d93a72" />
    <path d="M18 17.500h28c0 15-27 15-28 0z" fill="#c6cee2" />
    <path d="M19 18c5-3 8-10 12-11s9 7 14 11q-13 3-26 0z" fill="#33b886" />
  </svg>
);

const WindowsTaskbar = () => (
  <Taskbar>
    <StartButton>
      <svg width="15" height="16" viewBox="0 0 15 16" fill="#fff">
        <path d="M0 2.500l6.500-1v6H0zM7.500 1.300L15 0v7.500H7.500zM0 8.500h6.500v6L0 13.500zM7.500 8.500H15V16l-7.500-1.300z" />
      </svg>
    </StartButton>
    <SearchBox>
      <svg width="16" height="17" viewBox="0 0 16 17" fill="none" stroke="#222" strokeWidth="1.300">
        <circle cx="9.500" cy="6.500" r="5" /><path d="M6 10.500L1 16" />
      </svg>
      <Spacer $w={8.5} />
      <Txt $size={12.3} $ls={-0.2} $color="#444">Type here to search</Txt>
      <Spacer />
      <Bowls />
    </SearchBox>
    {taskIcons.map(renderTask)}
    <TaskSlot><ZoomLogo><Txt $size={5.500} $bold $color="#fff">zoom</Txt></ZoomLogo></TaskSlot>
    {taskIconsRight.map(renderTask)}
    <TaskSlot $active $running>
      <TaskLogo><Txt $size={11} $bold $color="#fff">R</Txt><Txt $size={4.500} $bold $color="#fff">PRO</Txt></TaskLogo>
    </TaskSlot>
    <Tray>
      <Spacer $w={146} />
      <svg width="20" height="22" viewBox="0 0 20 22">
        <circle cx="11" cy="11" r="8" fill="#f59a24" />
        <path d="M1 8c0-4 4-5 5-3 4-1 4 4 1 4H2z" fill="#c9e2f5" />
        <path d="M9 20c-1-4 3-5 4-3 4-2 7 3 4 4z" fill="#dcecf8" />
      </svg>
      <Spacer $w={7} />
      <Txt $size={12} $ls={-0.600} $color="#fff">91°F</Txt>
      <Spacer $w={21.5} />
      <Chevron dir="up" size={10} color="#fff" />
      <Spacer $w={10} />
      <svg width="12" height="14" fill="none" stroke="#fff"><rect x="1.500" y="3.500" width="6" height="8" rx="1" /><path d="M3 1.500h5M8 6l2.500-1v5L8 9M3 13.500h4" /></svg>
      <Spacer $w={9} />
      <svg width="8" height="15" fill="none" stroke="#fff"><rect x="2" y="1" width="4" height="7" rx="2" fill="#fff" /><path d="M.5 6c0 5 7 5 7 0M4 10v4M2 14h4" /></svg>
      <Spacer $w={11} />
      <svg width="14" height="10" fill="none" stroke="#fff"><rect x=".5" y="1.500" width="11" height="7" /><path d="M2 3h5v4H2z" fill="#fff" /><path d="M13 3.500v3" /></svg>
      <Spacer $w={7} />
      <svg width="12" height="12" fill="none" stroke="#dfe4ea"><path d="M1 11C1 5 5 1 11 1M4 11c0-4 3-7 7-7M7 11c0-2.500 1.500-4 4-4" /><circle cx="10" cy="10" r="1" fill="#fff" /></svg>
      <Spacer $w={7} />
      <svg width="14" height="12" fill="none" stroke="#fff"><path d="M1 4h2l3-3v10L3 8H1z" /><path d="M8 4c1 1 1 3 0 4M10 2.500c2 2 2 5 0 7" /><path d="M12 1c2.500 3 2.500 7 0 10" stroke="#9aa" /></svg>
      <Spacer $w={7} />
      <Txt $size={11} $ls={-0.900} $color="#fff">ENG</Txt>
      <Spacer $w={9.5} />
      <Clock>
        <Txt $size={11.300} $ls={-0.850} $color="#fff">12:06 PM</Txt>
        <Txt $size={11.300} $ls={-0.850} $color="#fff">3/25/2024</Txt>
      </Clock>
      <Spacer $w={11} />
      <svg width="22" height="22" viewBox="0 0 22 22">
        <path d="M1 2h14v11H7l-3 3v-3H1z" fill="#fff" />
        <path d="M3 5h10M3 7.500h10M3 10h7" stroke="#1a2b42" />
        <circle cx="14.500" cy="14.500" r="7" fill="#2b3a4d" stroke="#aab4bf" />
        <text x="14.500" y="18" fontSize="9" fill="#fff" textAnchor="middle" fontFamily={UI}>10</text>
      </svg>
    </Tray>
  </Taskbar>
);

const App = () => {
  return (
    <Desktop>
      <GlobalStyle />
      <Windows>
        <SnippingTool />
        <RobotApp />
      </Windows>
      <WindowsTaskbar />
    </Desktop>
  );
};

export default App;
